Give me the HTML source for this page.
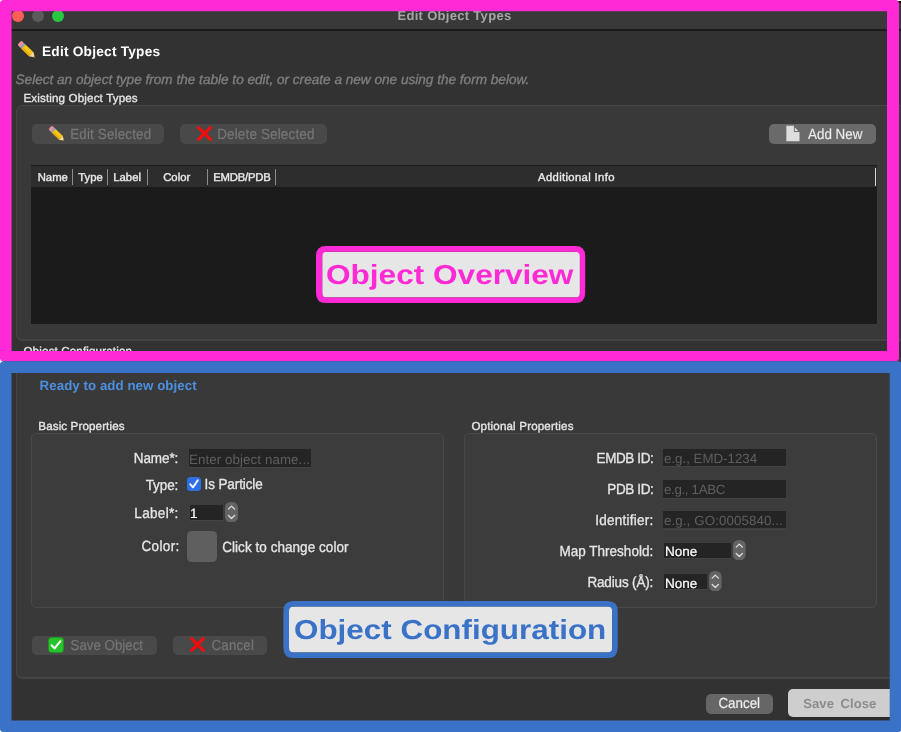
<!DOCTYPE html>
<html><head><meta charset="utf-8">
<style>
*{margin:0;padding:0;box-sizing:border-box}
html,body{width:901px;height:732px;overflow:hidden;background:#ffffff}
body{position:relative;font-family:"Liberation Sans",sans-serif;color:#e6e6e6;text-rendering:geometricPrecision}
.a{position:absolute;white-space:pre;line-height:normal}
#root{position:absolute;left:0;top:0;width:901px;height:732px;will-change:transform}
</style></head>
<body><div id="root">

<div class="a" style="left:0px;top:0px;width:901px;height:732px;background:#323232;"></div>
<div class="a" style="left:0px;top:0px;width:901px;height:29px;background:#393939;"></div>
<div class="a" style="left:0px;top:29px;width:901px;height:1.6px;background:#1a1a1a;"></div>
<div class="a" style="left:12.2px;top:9.9px;width:12px;height:12px;border-radius:50%;background:#fe5f57"></div>
<div class="a" style="left:32.2px;top:9.9px;width:12px;height:12px;border-radius:50%;background:#5b5b5b"></div>
<div class="a" style="left:52.2px;top:9.9px;width:12px;height:12px;border-radius:50%;background:#28c840"></div>
<div class="a" style="left:397.5px;top:8.00px;font-size:13px;color:#a6a6a6;font-weight:bold;font-style:normal;letter-spacing:0.3px;">Edit Object Types</div>
<svg class="a" style="left:15.2px;top:38.2px" width="24" height="24" viewBox="0 0 24 24"><g transform="translate(12,12) rotate(44) scale(1.0)"><rect x="-10.6" y="-2.95" width="4.4" height="5.9" rx="1.7" fill="#ee8e98"/><rect x="-7.2" y="-2.95" width="2.4" height="5.9" fill="#8ea3c2"/><rect x="-5" y="-2.95" width="11.2" height="5.9" fill="#f8c61a"/><rect x="-5" y="0.9" width="11.2" height="2.05" fill="#e8aa0e"/><path d="M6.1 -2.95 L10.9 0 L6.1 2.95 Z" fill="#f5dc9e"/><path d="M9.3 -1.05 L10.9 0 L9.3 1.05 Z" fill="#7a6440"/></g></svg>
<div class="a" style="left:42px;top:44.00px;font-size:13.7px;color:#ffffff;font-weight:bold;font-style:normal;letter-spacing:0.22px;">Edit Object Types</div>
<div class="a" style="left:15.5px;top:72.00px;font-size:13.6px;color:#7e7e7e;font-weight:normal;font-style:italic;-webkit-text-stroke:0.35px #7e7e7e;">Select an object type from the table to edit, or create a new one using the form below.</div>
<div class="a" style="left:23.4px;top:92.00px;font-size:11.6px;color:#e4e4e4;font-weight:normal;font-style:normal;letter-spacing:0.15px;-webkit-text-stroke:0.35px #e4e4e4;">Existing Object Types</div>
<div class="a" style="left:16px;top:104.8px;width:890px;height:235.8px;background:#393939;border:1px solid #454545;border-bottom:2px solid #434343;border-radius:6px"></div>
<div class="a" style="left:32.2px;top:124.2px;width:131.8px;height:20.1px;background:#494949;border-radius:5px"></div>
<svg class="a" style="left:44.5px;top:122.0px" width="24" height="24" viewBox="0 0 24 24"><g transform="translate(12,12) rotate(44) scale(0.9)"><rect x="-10.6" y="-2.95" width="4.4" height="5.9" rx="1.7" fill="#ee8e98"/><rect x="-7.2" y="-2.95" width="2.4" height="5.9" fill="#8ea3c2"/><rect x="-5" y="-2.95" width="11.2" height="5.9" fill="#f8c61a"/><rect x="-5" y="0.9" width="11.2" height="2.05" fill="#e8aa0e"/><path d="M6.1 -2.95 L10.9 0 L6.1 2.95 Z" fill="#f5dc9e"/><path d="M9.3 -1.05 L10.9 0 L9.3 1.05 Z" fill="#7a6440"/></g></svg>
<div class="a" style="left:70.2px;top:127.00px;font-size:13.4px;color:#777777;font-weight:normal;font-style:normal;letter-spacing:0.17px;-webkit-text-stroke:0.15px #777777;transform:scaleY(1.09);transform-origin:0 12px;">Edit Selected</div>
<div class="a" style="left:180.4px;top:124.2px;width:146.6px;height:20.1px;background:#494949;border-radius:5px"></div>
<svg class="a" style="left:196px;top:125px" width="17" height="17" viewBox="0 0 17 17"><path d="M2.6 2.6 L14.4 14.4 M14.4 2.6 L2.6 14.4" stroke="#f40c0c" stroke-width="3.1" stroke-linecap="round"/></svg>
<div class="a" style="left:217.2px;top:127.00px;font-size:13.5px;color:#777777;font-weight:normal;font-style:normal;letter-spacing:0.14px;-webkit-text-stroke:0.15px #777777;transform:scaleY(1.09);transform-origin:0 12px;">Delete Selected</div>
<div class="a" style="left:769.1px;top:124.3px;width:106.7px;height:20.2px;background:#6a6a6a;border-radius:5px"></div>
<svg class="a" style="left:786px;top:125px" width="14" height="17" viewBox="0 0 14 17"><path d="M0.35 0.7 H7.9 V7 H13.5 V16.3 H0.35 Z" fill="#dedede"/><path d="M8.8 2.4 L12.2 5.9 L8.8 5.9 Z" fill="#e4e4e4"/></svg>
<div class="a" style="left:808px;top:127.00px;font-size:13.4px;color:#ececec;font-weight:normal;font-style:normal;-webkit-text-stroke:0.15px #ececec;transform:scaleY(1.09);transform-origin:0 12px;">Add New</div>
<div class="a" style="left:31.2px;top:165px;width:845.6px;height:159.2px;background:#1b1b1b;"></div>
<div class="a" style="left:31.2px;top:166.4px;width:845.6px;height:21px;background:#2d2d2d;"></div>
<div class="a" style="left:37.7px;top:172.00px;font-size:11.3px;color:#e8e8e8;font-weight:normal;font-style:normal;-webkit-text-stroke:0.4px #e8e8e8;">Name</div>
<div class="a" style="left:78.3px;top:172.00px;font-size:11.3px;color:#e8e8e8;font-weight:normal;font-style:normal;-webkit-text-stroke:0.4px #e8e8e8;">Type</div>
<div class="a" style="left:113.3px;top:172.00px;font-size:11.3px;color:#e8e8e8;font-weight:normal;font-style:normal;-webkit-text-stroke:0.4px #e8e8e8;">Label</div>
<div class="a" style="left:163.2px;top:172.00px;font-size:11.3px;color:#e8e8e8;font-weight:normal;font-style:normal;-webkit-text-stroke:0.4px #e8e8e8;">Color</div>
<div class="a" style="left:213.2px;top:172.00px;font-size:11.3px;color:#e8e8e8;font-weight:normal;font-style:normal;letter-spacing:-0.2px;-webkit-text-stroke:0.4px #e8e8e8;">EMDB/PDB</div>
<div class="a" style="left:538px;top:172.00px;font-size:11.3px;color:#e8e8e8;font-weight:normal;font-style:normal;letter-spacing:0.35px;-webkit-text-stroke:0.4px #e8e8e8;">Additional Info</div>
<div class="a" style="left:72.4px;top:168.7px;width:1px;height:16.6px;background:#8c8c8c;"></div>
<div class="a" style="left:107.4px;top:168.7px;width:1px;height:16.6px;background:#8c8c8c;"></div>
<div class="a" style="left:146.5px;top:168.7px;width:1px;height:16.6px;background:#8c8c8c;"></div>
<div class="a" style="left:206.5px;top:168.7px;width:1px;height:16.6px;background:#8c8c8c;"></div>
<div class="a" style="left:275.4px;top:168.7px;width:1px;height:16.6px;background:#8c8c8c;"></div>
<div class="a" style="left:874.8px;top:168.2px;width:1.2px;height:17.8px;background:#d8d8d8;"></div>
<div class="a" style="left:23.4px;top:345.00px;font-size:11.6px;color:#e4e4e4;font-weight:normal;font-style:normal;letter-spacing:0.15px;-webkit-text-stroke:0.35px #e4e4e4;">Object Configuration</div>
<div class="a" style="left:16px;top:358px;width:890px;height:321.2px;background:#393939;border:1px solid #454545;border-bottom:2px solid #434343;border-radius:6px"></div>
<div class="a" style="left:39.6px;top:378.00px;font-size:13.3px;color:#4b8fe0;font-weight:bold;font-style:normal;letter-spacing:0.05px;">Ready to add new object</div>
<div class="a" style="left:38.3px;top:420.00px;font-size:11.6px;color:#e4e4e4;font-weight:normal;font-style:normal;letter-spacing:0.12px;-webkit-text-stroke:0.35px #e4e4e4;">Basic Properties</div>
<div class="a" style="left:471.4px;top:420.00px;font-size:11.6px;color:#e4e4e4;font-weight:normal;font-style:normal;letter-spacing:0.16px;-webkit-text-stroke:0.35px #e4e4e4;">Optional Properties</div>
<div class="a" style="left:31.2px;top:433px;width:412.6px;height:174.6px;background:#3c3c3c;border:1px solid #494949;border-radius:5px"></div>
<div class="a" style="left:464.4px;top:433px;width:412.4px;height:174.6px;background:#3c3c3c;border:1px solid #494949;border-radius:5px"></div>
<div class="a" style="right:722.8px;text-align:right;top:451.00px;font-size:13.5px;color:#e6e6e6;font-weight:normal;font-style:normal;letter-spacing:-0.1px;-webkit-text-stroke:0.3px #e6e6e6;transform:scaleY(1.09);transform-origin:0 12px;">Name*:</div>
<div class="a" style="left:188.5px;top:449px;width:122.5px;height:17.5px;background:#242424;"></div>
<div class="a" style="left:188.5px;top:466.5px;width:122.5px;height:1px;background:#444444;"></div>
<div class="a" style="left:189px;top:452.00px;font-size:13.3px;color:#5f5f5f;font-weight:normal;font-style:normal;letter-spacing:0.1px;">Enter object name...</div>
<div class="a" style="right:722.8px;text-align:right;top:478.00px;font-size:13.5px;color:#e6e6e6;font-weight:normal;font-style:normal;letter-spacing:-0.1px;-webkit-text-stroke:0.3px #e6e6e6;transform:scaleY(1.09);transform-origin:0 12px;">Type:</div>
<div class="a" style="left:187.2px;top:476.6px;width:14px;height:14px;border-radius:3.5px;background:#2d6fe6"></div>
<svg class="a" style="left:187.2px;top:476.6px" width="14" height="14" viewBox="0 0 14 14"><path d="M3.3 7.3 L6 10.4 L10.8 3.3" stroke="#ffffff" stroke-width="1.9" fill="none" stroke-linecap="round" stroke-linejoin="round"/></svg>
<div class="a" style="left:204.5px;top:477.00px;font-size:13.5px;color:#e6e6e6;font-weight:normal;font-style:normal;letter-spacing:-0.1px;-webkit-text-stroke:0.3px #e6e6e6;transform:scaleY(1.09);transform-origin:0 12px;">Is Particle</div>
<div class="a" style="right:722.4px;text-align:right;top:506.00px;font-size:13.5px;color:#e6e6e6;font-weight:normal;font-style:normal;letter-spacing:0.32px;-webkit-text-stroke:0.3px #e6e6e6;transform:scaleY(1.09);transform-origin:0 12px;">Label*:</div>
<div class="a" style="left:189.5px;top:505px;width:33.2px;height:15.2px;background:#242424;"></div>
<div class="a" style="left:189.5px;top:520.2px;width:33.2px;height:1px;background:#444444;"></div>
<div class="a" style="left:190px;top:506.00px;font-size:13.5px;color:#ffffff;font-weight:normal;font-style:normal;-webkit-text-stroke:0.2px #ffffff;">1</div>
<svg class="a" style="left:225px;top:502.2px" width="13" height="20.3" viewBox="0 0 13 20.3"><rect x="0" y="0" width="13" height="20.3" rx="5.5" fill="#646464"/><path d="M3.40 7.1 L6.50 4.1 L9.60 7.1" stroke="#e0e0e0" stroke-width="1.25" fill="none" stroke-linecap="round" stroke-linejoin="round"/><path d="M3.40 13.50 L6.50 16.50 L9.60 13.50" stroke="#e0e0e0" stroke-width="1.25" fill="none" stroke-linecap="round" stroke-linejoin="round"/></svg>
<div class="a" style="right:721.4px;text-align:right;top:539.00px;font-size:13.5px;color:#e6e6e6;font-weight:normal;font-style:normal;letter-spacing:0.36px;-webkit-text-stroke:0.3px #e6e6e6;transform:scaleY(1.09);transform-origin:0 12px;">Color:</div>
<div class="a" style="left:187px;top:531.3px;width:30.2px;height:30.5px;border-radius:4.5px;background:#5f5f5f"></div>
<div class="a" style="left:222.2px;top:540.00px;font-size:13.5px;color:#e6e6e6;font-weight:normal;font-style:normal;letter-spacing:0.05px;-webkit-text-stroke:0.3px #e6e6e6;transform:scaleY(1.09);transform-origin:0 12px;">Click to change color</div>
<div class="a" style="right:247.60000000000002px;text-align:right;top:451.00px;font-size:13.5px;color:#e6e6e6;font-weight:normal;font-style:normal;letter-spacing:-0.39px;-webkit-text-stroke:0.3px #e6e6e6;transform:scaleY(1.09);transform-origin:0 12px;">EMDB ID:</div>
<div class="a" style="left:663.2px;top:448.8px;width:122.7px;height:17.6px;background:#242424;"></div>
<div class="a" style="left:663.2px;top:466.40000000000003px;width:122.7px;height:1px;background:#444444;"></div>
<div class="a" style="left:664px;top:451.00px;font-size:13.3px;color:#5f5f5f;font-weight:normal;font-style:normal;">e.g., EMD-1234</div>
<div class="a" style="right:247.60000000000002px;text-align:right;top:482.00px;font-size:13.5px;color:#e6e6e6;font-weight:normal;font-style:normal;letter-spacing:-0.38px;-webkit-text-stroke:0.3px #e6e6e6;transform:scaleY(1.09);transform-origin:0 12px;">PDB ID:</div>
<div class="a" style="left:663.2px;top:479.8px;width:122.7px;height:17.8px;background:#242424;"></div>
<div class="a" style="left:663.2px;top:497.6px;width:122.7px;height:1px;background:#444444;"></div>
<div class="a" style="left:664px;top:482.00px;font-size:13.3px;color:#5f5f5f;font-weight:normal;font-style:normal;letter-spacing:-0.33px;">e.g., 1ABC</div>
<div class="a" style="right:247.60000000000002px;text-align:right;top:513.00px;font-size:13.5px;color:#e6e6e6;font-weight:normal;font-style:normal;letter-spacing:0.25px;-webkit-text-stroke:0.3px #e6e6e6;transform:scaleY(1.09);transform-origin:0 12px;">Identifier:</div>
<div class="a" style="left:663.2px;top:510.7px;width:122.7px;height:17.8px;background:#242424;"></div>
<div class="a" style="left:663.2px;top:528.5px;width:122.7px;height:1px;background:#444444;"></div>
<div class="a" style="left:664px;top:513.00px;font-size:13.3px;color:#5f5f5f;font-weight:normal;font-style:normal;letter-spacing:0.11px;">e.g., GO:0005840...</div>
<div class="a" style="right:247.79999999999995px;text-align:right;top:544.00px;font-size:13.5px;color:#e6e6e6;font-weight:normal;font-style:normal;letter-spacing:0.01px;-webkit-text-stroke:0.3px #e6e6e6;transform:scaleY(1.09);transform-origin:0 12px;">Map Threshold:</div>
<div class="a" style="left:664.4px;top:543px;width:66.3px;height:15.3px;background:#242424;"></div>
<div class="a" style="left:664.4px;top:558.3px;width:66.3px;height:1px;background:#444444;"></div>
<div class="a" style="left:665px;top:544.00px;font-size:13.5px;color:#ffffff;font-weight:normal;font-style:normal;-webkit-text-stroke:0.2px #ffffff;">None</div>
<svg class="a" style="left:733.2px;top:540px" width="12.6" height="20.3" viewBox="0 0 12.6 20.3"><rect x="0" y="0" width="12.6" height="20.3" rx="5.5" fill="#646464"/><path d="M3.20 7.1 L6.30 4.1 L9.40 7.1" stroke="#e0e0e0" stroke-width="1.25" fill="none" stroke-linecap="round" stroke-linejoin="round"/><path d="M3.20 13.50 L6.30 16.50 L9.40 13.50" stroke="#e0e0e0" stroke-width="1.25" fill="none" stroke-linecap="round" stroke-linejoin="round"/></svg>
<div class="a" style="right:247.79999999999995px;text-align:right;top:575.00px;font-size:13.5px;color:#e6e6e6;font-weight:normal;font-style:normal;letter-spacing:-0.16px;-webkit-text-stroke:0.3px #e6e6e6;transform:scaleY(1.09);transform-origin:0 12px;">Radius (&#197;):</div>
<div class="a" style="left:664.4px;top:574.2px;width:42.2px;height:15.2px;background:#242424;"></div>
<div class="a" style="left:664.4px;top:589.4000000000001px;width:42.2px;height:1px;background:#444444;"></div>
<div class="a" style="left:665px;top:576.00px;font-size:13.5px;color:#ffffff;font-weight:normal;font-style:normal;-webkit-text-stroke:0.2px #ffffff;">None</div>
<svg class="a" style="left:709.2px;top:571.1px" width="12.6" height="20.3" viewBox="0 0 12.6 20.3"><rect x="0" y="0" width="12.6" height="20.3" rx="5.5" fill="#646464"/><path d="M3.20 7.1 L6.30 4.1 L9.40 7.1" stroke="#e0e0e0" stroke-width="1.25" fill="none" stroke-linecap="round" stroke-linejoin="round"/><path d="M3.20 13.50 L6.30 16.50 L9.40 13.50" stroke="#e0e0e0" stroke-width="1.25" fill="none" stroke-linecap="round" stroke-linejoin="round"/></svg>
<div class="a" style="left:32.3px;top:635.6px;width:124.7px;height:19.6px;background:#494949;border-radius:5px"></div>
<svg class="a" style="left:48px;top:637px" width="16" height="16" viewBox="0 0 16 16"><rect x="0.5" y="0.5" width="15" height="15" rx="3" fill="#27c22c" stroke="#1a9a1f" stroke-width="0.8"/><path d="M3.6 8.2 L6.6 11.4 L12.4 4.2" stroke="#fff" stroke-width="2" fill="none" stroke-linecap="round" stroke-linejoin="round"/></svg>
<div class="a" style="left:70.6px;top:638.00px;font-size:13.3px;color:#777777;font-weight:normal;font-style:normal;-webkit-text-stroke:0.15px #777777;transform:scaleY(1.09);transform-origin:0 12px;">Save Object</div>
<div class="a" style="left:173.3px;top:635.6px;width:94px;height:19.6px;background:#494949;border-radius:5px"></div>
<svg class="a" style="left:189px;top:636px" width="17" height="17" viewBox="0 0 17 17"><path d="M2.6 2.6 L14.4 14.4 M14.4 2.6 L2.6 14.4" stroke="#f40c0c" stroke-width="3.1" stroke-linecap="round"/></svg>
<div class="a" style="left:211.5px;top:638.00px;font-size:13.3px;color:#777777;font-weight:normal;font-style:normal;letter-spacing:0.2px;-webkit-text-stroke:0.15px #777777;transform:scaleY(1.09);transform-origin:0 12px;">Cancel</div>
<div class="a" style="left:706.2px;top:694.2px;width:66.5px;height:20.1px;background:#666666;border-radius:5px"></div>
<div class="a" style="left:718.4px;top:696.00px;font-size:13.4px;color:#f0f0f0;font-weight:normal;font-style:normal;-webkit-text-stroke:0.15px #f0f0f0;transform:scaleY(1.09);transform-origin:0 12px;">Cancel</div>
<div class="a" style="left:788px;top:689.2px;width:110px;height:27.8px;background:#cecece;border-radius:5px"></div>
<div class="a" style="left:788px;top:716.9px;width:110px;height:3.5px;background:#2b2b2b;"></div>
<div class="a" style="left:803.2px;top:696.00px;font-size:13.1px;color:#8c8c8c;font-weight:bold;font-style:normal;letter-spacing:0.05px;">Save</div>
<div class="a" style="left:840.5px;top:696.00px;font-size:13.1px;color:#8c8c8c;font-weight:bold;font-style:normal;letter-spacing:0.05px;">Close</div>
<svg class="a" style="left:0;top:0" width="901" height="732" viewBox="0 0 901 732"><path fill="#ffffff" d="M0 0 H3 V3 H0 Z M896 0 H901 V1 H896 Z M0 359 H3 V364 H0 Z M0 728 H4 V732 H0 Z M897 728 H901 V732 H897 Z"/><path fill="#000000" d="M898 1 H901 V3 H898 Z"/><path fill-rule="evenodd" fill="#ff2ad5" d="M3.5 0 H895.5 Q899 0 899 3.5 V357.7 Q899 361.2 895.5 361.2 H3.5 Q0 361.2 0 357.7 V3.5 Q0 0 3.5 0 Z M11.6 11.2 H887 V351 H11.6 Z"/><path fill-rule="evenodd" fill="#3a72c8" d="M3.5 361.2 H898.0 Q901.5 361.2 901.5 364.7 V728.5 Q901.5 732 898.0 732 H3.5 Q0 732 0 728.5 V364.7 Q0 361.2 3.5 361.2 Z M11.5 373.1 H889.7 V720.4 H11.5 Z"/><path fill="#e6e6e6" d="M322.2 251.8 H579.9 V297.5 H322.2 Z"/><path fill-rule="evenodd" fill="#ff2ad5" d="M326 246.1 H575.2 Q585.2 246.1 585.2 256.1 V293 Q585.2 303 575.2 303 H326 Q316 303 316 293 V256.1 Q316 246.1 326 246.1 Z M327.2 251.8 H574.9 Q579.9 251.8 579.9 256.8 V292.5 Q579.9 297.5 574.9 297.5 H327.2 Q322.2 297.5 322.2 292.5 V256.8 Q322.2 251.8 327.2 251.8 Z"/><path fill="#e6e6e6" d="M289 606.6 H612.2 V652.4 H289 Z"/><path fill-rule="evenodd" fill="#3a72c8" d="M293.4 601.1 H607.7 Q617.7 601.1 617.7 611.1 V647.9 Q617.7 657.9 607.7 657.9 H293.4 Q283.4 657.9 283.4 647.9 V611.1 Q283.4 601.1 293.4 601.1 Z M294 606.6 H607.2 Q612.2 606.6 612.2 611.6 V647.4 Q612.2 652.4 607.2 652.4 H294 Q289 652.4 289 647.4 V611.6 Q289 606.6 294 606.6 Z"/></svg>
<div class="a" style="left:326px;top:259.2px;font-size:27.5px;font-weight:bold;color:#ff2ad5;transform:scaleX(1.148);transform-origin:0 0">Object Overview</div>
<div class="a" style="left:294.3px;top:614.3px;font-size:27.5px;font-weight:bold;color:#3a72c8;transform:scaleX(1.142);transform-origin:0 0">Object Configuration</div>
</div></body></html>
